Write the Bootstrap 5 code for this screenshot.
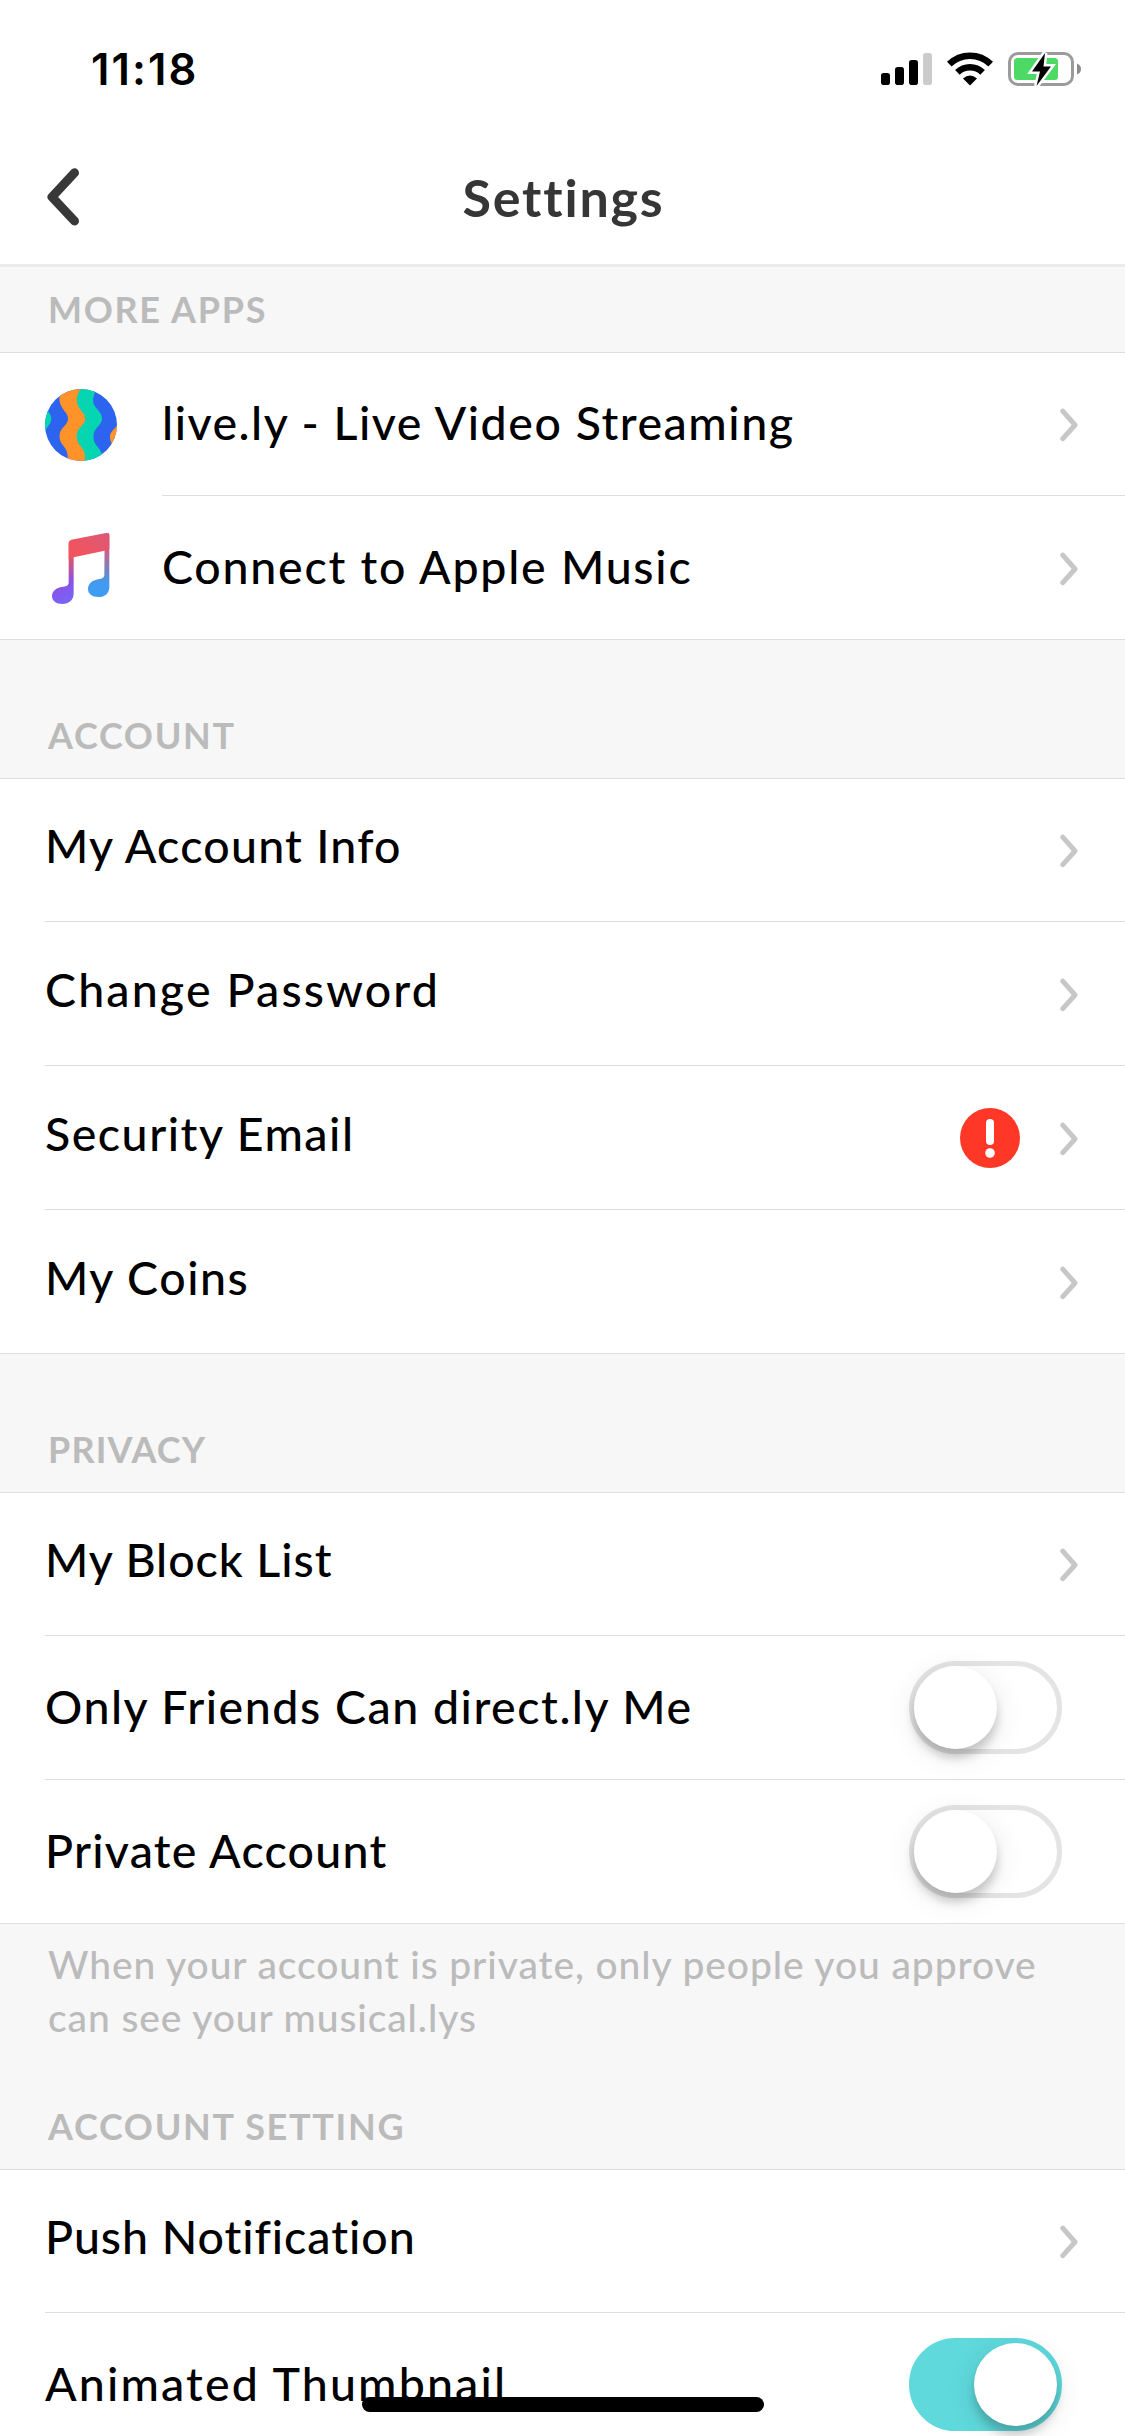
<!DOCTYPE html>
<html lang="en">
<head>
<meta charset="utf-8">
<meta name="viewport" content="width=device-width, initial-scale=1">
<title>Settings</title>
<link rel="stylesheet" href="https://cdn.jsdelivr.net/npm/bootstrap@5.3.0/dist/css/bootstrap.min.css">
<style>
  html, body { overflow: hidden; }
  body { width: 1125px; height: 2436px; background: #fff; color: #000; font-family: Lato, "Noto Sans", sans-serif; }
  .status-bar { height: 132px; padding: 6px 44px 0 91px; }
  .clock { font: 600 43.5px/1 Inter, sans-serif; letter-spacing: 2.1px; padding-top: 2px; }
  .status-icons { gap: 15px; }
  .title-bar { height: 135px; border-bottom: 3px solid #ebebeb; }
  .title-bar h1 { font-size: 52px; line-height: 62px; font-weight: 700; letter-spacing: 1.8px; color: #363636; margin: 0; padding: 0 0 3px 2px; }
  .back-btn { left: 45px; top: 34px; }
  .section-head { background: #f7f7f7; height: 138px; padding: 0 48px; font-size: 36px; line-height: 44px; font-weight: 700; letter-spacing: 1.7px; color: #bbb; }
  .section-head span { padding-bottom: 21px; }
  .section-head .ls-snug { letter-spacing: 1.1px; }
  .section-head.first { height: 85px; }
  .section-head.after-note { height: 104px; }
  .note { background: #f7f7f7; height: 141px; padding: 14px 48px 0; font-size: 39px; line-height: 53px; font-weight: 500; letter-spacing: .9px; color: #bbb; }
  .rows { border-top: 1px solid #dedede; border-bottom: 1px solid #dedede; }
  .rows.cut { border-bottom: 0; }
  .entry { height: 144px; padding-left: 45px; }
  .entry:first-child, .entry:last-child { height: 143px; }
  .entry .cell { flex: 1; height: 100%; padding-right: 47px; border-bottom: 1px solid #dedede; }
  .entry:last-child .cell { border-bottom: 0; }
  .entry .app-icon { margin-right: 45px; }
  .entry .label { font-size: 46.5px; line-height: 56px; font-weight: 500; letter-spacing: 1.52px; padding-bottom: 10px; white-space: nowrap; }
  .entry .label.beside-icon { padding-bottom: 4px; }
  .entry .label.beside-switch { padding-bottom: 3px; }
  .entry .label.ls-snug { letter-spacing: .95px; }
  .entry .label.ls-near { letter-spacing: 1.25px; }
  .entry .label.ls-roomy { letter-spacing: 1.75px; }
  .entry .label.ls-wide { letter-spacing: 2.15px; }
  .chev { margin-top: 2px; }
  .toggle { width: 153px; height: 93px; border-radius: 47px; border: 5px solid #e4e4e4; margin-right: 16px; }
  .toggle i { display: block; width: 83px; height: 83px; border-radius: 50%; background: #fff; box-shadow: 0 9px 10px rgba(0,0,0,.18), 0 6px 30px rgba(0,0,0,.1); }
  .toggle.on { background: #5fd9dc; border-color: #5fd9dc; }
  .toggle.on i { margin-left: 60px; }
  .home-bar { left: 362px; top: 2397px; width: 402px; height: 15px; border-radius: 8px; background: #000; }
</style>
<script src="https://cdn.jsdelivr.net/npm/bootstrap@5.3.0/dist/js/bootstrap.bundle.min.js"></script>
</head>
<body class="position-relative">

<svg class="d-none">
  <symbol id="chevron" viewBox="0 0 18 34"><path d="M2.8 3.2 15 17 2.8 30.6" fill="none" stroke="#c7c7c7" stroke-width="5" stroke-linecap="round" stroke-linejoin="round"/></symbol>
</svg>

<div class="status-bar d-flex align-items-center justify-content-between">
  <div class="clock">11:18</div>
  <div class="status-icons d-flex align-items-center">
    <svg width="51" height="34" viewBox="0 0 51 34"><rect x="0" y="21" width="9" height="12" rx="2.8"/><rect x="14" y="15" width="9" height="18" rx="2.8"/><rect x="28" y="8" width="9" height="25" rx="2.8"/><rect x="42" y="1" width="9" height="32" rx="2.8" fill="#cbcbcb"/></svg>
    <svg width="46" height="34" viewBox="0 0 46 34"><g fill="none" stroke="#000"><path d="M2.3 12.2a29.6 29.6 0 0 1 41.4 0" stroke-width="6.6"/><path d="M10.4 20.4a18 18 0 0 1 25.2 0" stroke-width="6.6"/></g><path d="M23 33.4 16 26.4q7-5.7 14 0z"/></svg>
    <svg width="73" height="34" viewBox="0 0 73 34"><rect x="1.5" y="1.5" width="63" height="31" rx="8.5" fill="none" stroke="#9b9b9b" stroke-width="3"/><path d="M69 11.5q4 1.500 4 5.500t-4 5.500z" fill="#8c8c8c"/><rect x="6" y="6" width="44" height="22" rx="3.500" fill="#4cd964"/><path d="M37 1 24 19.500h8L28.500 34 43 14.500h-7.500z" stroke="#fff" stroke-width="5"/><path d="M37 1 24 19.500h8L28.500 34 43 14.500h-7.500z"/></svg>
  </div>
</div>

<header class="title-bar position-relative d-flex justify-content-center align-items-center">
  <a href="#" class="back-btn position-absolute" aria-label="Back"><svg class="d-block" width="36" height="62" viewBox="0 0 36 62"><path d="M29.500 6.800 7 31 29.500 55" fill="none" stroke="#383838" stroke-width="9" stroke-linecap="round" stroke-linejoin="round"/></svg></a>
  <h1>Settings</h1>
</header>

<main>
  <div class="section-head first d-flex align-items-end"><span>MORE APPS</span></div>
  <div class="rows">
    <div class="entry d-flex align-items-center">
      <svg class="app-icon" width="72" height="72" viewBox="45 54 216 216">
        <clipPath id="globe"><circle cx="153" cy="162" r="108"/></clipPath>
        <g clip-path="url(#globe)">
          <path fill="#2c64f0" d="M45 54h216v216H45z"/>
          <path fill="#ff9228" d="M98 50C86 75 86 90 94 106S114 128 114 143 101 165 94 176 86 205 96 219 116 240 113 275H166V50z"/>
          <path fill="#05d5b0" d="M154 50C138 75 138 90 145 106S166 128 166 143 152 165 145 176 138 205 147 219 170 240 164 275H232L216 249C208 232 200 226 195 217S188 190 195 178 216 158 216 143 203 118 195 106 186 85 200 50z"/>
          <path fill="#05d5b0" d="M40 110h11c4 16 13 20 13 33s-9 20-17 34h-7z"/>
          <path fill="#ff9228" d="M265 158c-10 16-26 26-25 40 0 10 3 14 6 22l19-6z"/>
        </g>
      </svg>
      <div class="cell d-flex align-items-center justify-content-between"><span class="label beside-icon">live.ly - Live Video Streaming</span><svg class="chev" width="18" height="34"><use href="#chevron"/></svg></div>
    </div>
    <div class="entry d-flex align-items-center">
      <svg class="app-icon" width="72" height="72" viewBox="45 486 216 216">
        <defs>
          <linearGradient id="note-left" x1="0" y1="0" x2="0.150" y2="1"><stop offset=".25" stop-color="#f2545f"/><stop offset=".5" stop-color="#c4558c"/><stop offset=".75" stop-color="#8a52e8"/><stop offset="1" stop-color="#7a62f5"/></linearGradient>
          <linearGradient id="note-right" x1="0" y1="0" x2="0" y2="1"><stop offset="0" stop-color="#d95a78"/><stop offset=".3" stop-color="#c9608c"/><stop offset=".68" stop-color="#5b90d2"/><stop offset=".8" stop-color="#3f9cf2"/><stop offset="1" stop-color="#3f9cf2"/></linearGradient>
          <linearGradient id="note-beam" x1="0" y1="1" x2="1" y2="0"><stop offset=".3" stop-color="#f0545f"/><stop offset="1" stop-color="#d95a78"/></linearGradient>
        </defs>
        <path fill="url(#note-right)" d="M224 500 234 488q4 1 4 6V650c0 20-13 31-33 31-19 0-31-10-31-24 0-17 14-27 34-30 11-2 15-4 15-14z"/>
        <path fill="url(#note-left)" d="M116 518v118c0 10-4 12-15 14-21 2-35 12-35 28 0 14 12 24 31 24 21 0 34-12 34-32V520z"/>
        <path fill="url(#note-beam)" d="M116 562V519q0-8 8-10L228 489q10-2 10 8v40l-14 5-93 20-15 6z"/>
      </svg>
      <div class="cell d-flex align-items-center justify-content-between"><span class="label beside-icon ls-roomy">Connect to Apple Music</span><svg class="chev" width="18" height="34"><use href="#chevron"/></svg></div>
    </div>
  </div>

  <div class="section-head d-flex align-items-end"><span>ACCOUNT</span></div>
  <div class="rows">
    <div class="entry"><div class="cell d-flex align-items-center justify-content-between"><span class="label ls-near">My Account Info</span><svg class="chev" width="18" height="34"><use href="#chevron"/></svg></div></div>
    <div class="entry"><div class="cell d-flex align-items-center justify-content-between"><span class="label ls-wide">Change Password</span><svg class="chev" width="18" height="34"><use href="#chevron"/></svg></div></div>
    <div class="entry"><div class="cell d-flex align-items-center"><span class="label me-auto">Security Email</span>
      <svg class="me-4" width="60" height="60" viewBox="0 0 60 60"><circle cx="30" cy="30" r="30" fill="#ff3726"/><path d="M30 15v18" stroke="#fff" stroke-width="8" stroke-linecap="round"/><circle cx="30" cy="45" r="4.800" fill="#fff"/></svg>
      <svg class="chev ms-3" width="18" height="34"><use href="#chevron"/></svg></div></div>
    <div class="entry"><div class="cell d-flex align-items-center justify-content-between"><span class="label">My Coins</span><svg class="chev" width="18" height="34"><use href="#chevron"/></svg></div></div>
  </div>

  <div class="section-head d-flex align-items-end"><span class="ls-snug">PRIVACY</span></div>
  <div class="rows">
    <div class="entry"><div class="cell d-flex align-items-center justify-content-between"><span class="label ls-snug">My Block List</span><svg class="chev" width="18" height="34"><use href="#chevron"/></svg></div></div>
    <div class="entry"><div class="cell d-flex align-items-center justify-content-between"><span class="label beside-switch">Only Friends Can direct.ly Me</span><span class="toggle"><i></i></span></div></div>
    <div class="entry"><div class="cell d-flex align-items-center justify-content-between"><span class="label beside-switch ls-near">Private Account</span><span class="toggle"><i></i></span></div></div>
  </div>

  <div class="note">When your account is private, only people you approve<br>can see your musical.lys</div>
  <div class="section-head after-note d-flex align-items-end"><span>ACCOUNT SETTING</span></div>
  <div class="rows cut">
    <div class="entry"><div class="cell d-flex align-items-center justify-content-between"><span class="label ls-snug">Push Notification</span><svg class="chev" width="18" height="34"><use href="#chevron"/></svg></div></div>
    <div class="entry"><div class="cell d-flex align-items-center justify-content-between"><span class="label beside-switch ls-wide">Animated Thumbnail</span><span class="toggle on"><i></i></span></div></div>
  </div>
</main>

<div class="home-bar position-absolute"></div>
</body>
</html>
